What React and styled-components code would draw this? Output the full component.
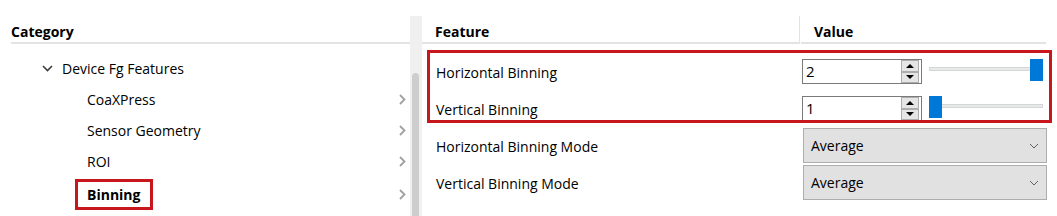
import React from 'react'
import styled, { createGlobalStyle } from 'styled-components';

const GlobalStyle = createGlobalStyle`
    html, body {
        margin: 0;
        padding: 0;
        background: #ffffff;
    }
    body {
        font-family: "Open Sans", "Noto Sans", sans-serif;
        font-size: 14px;
        color: #000000;
    }
`

const treeItems = [
    { label: 'CoaXPress' },
    { label: 'Sensor Geometry' },
    { label: 'ROI' },
    { label: 'Binning', selected: true },
];

const features = [
    { label: 'Horizontal Binning', kind: 'spin', value: 2, min: 1, max: 2 },
    { label: 'Vertical Binning', kind: 'spin', value: 1, min: 1, max: 2 },
    { label: 'Horizontal Binning Mode', kind: 'combo', value: 'Average' },
    { label: 'Vertical Binning Mode', kind: 'combo', value: 'Average' },
];

const ChevronDown = () => (
    <svg width="11" height="7" viewBox="0 0 11 7">
        <polyline points="1,1 5.5,5.5 10,1" fill="none" stroke="#3c3c3c" strokeWidth="1.6" />
    </svg>
)

const ChevronRight = () => (
    <svg width="7" height="11" viewBox="0 0 7 11">
        <polyline points="1,1 5.5,5.5 1,10" fill="none" stroke="#a0a0a0" strokeWidth="1.8" />
    </svg>
)

const ComboChevron = () => (
    <svg width="10" height="6" viewBox="0 0 10 6">
        <polyline points="1,1 5,5 9,1" fill="none" stroke="#606060" strokeWidth="1" />
    </svg>
)

const Slider = ({ value, min, max }) => {
    const pos = ((value - min) / (max - min)) * (114 - 13);
    return (
        <SliderBox>
            <Track />
            <Thumb style={{ left: pos }} />
        </SliderBox>
    )
}

const SpinEditor = ({ value, min, max }) => (
    <ValueCell>
        <SpinBox>
            <SpinText>{value}</SpinText>
            <SpinButtons>
                <SpinButton><Arrow $up /></SpinButton>
                <SpinButton><Arrow /></SpinButton>
            </SpinButtons>
        </SpinBox>
        <Slider value={value} min={min} max={max} />
    </ValueCell>
)

const FeatureRow = ({ item }) => (
    <Row>
        <Label>{item.label}</Label>
        {item.kind === 'spin' ? (
            <SpinEditor value={item.value} min={item.min} max={item.max} />
        ) : (
            <ValueCell>
                <Combo>
                    <span>{item.value}</span>
                    <ComboChevron />
                </Combo>
            </ValueCell>
        )}
    </Row>
)

const App = () => {
    return (
        <>
            <GlobalStyle />
            <Page>
                <LeftPanel>
                    <Tree>
                        <TreeHeader>Category</TreeHeader>
                        <TreeList>
                            <TreeRow $indent={31}>
                                <ChevronDown />
                                <ParentLabel>Device Fg Features</ParentLabel>
                            </TreeRow>
                            {treeItems.map((item) => (
                                <TreeRow key={item.label} $indent={item.selected ? 64 : 76} $last={item.selected}>
                                    {item.selected
                                        ? <SelectedLabel>{item.label}</SelectedLabel>
                                        : <span>{item.label}</span>}
                                    <Expander><ChevronRight /></Expander>
                                </TreeRow>
                            ))}
                        </TreeList>
                    </Tree>
                    <ScrollTrack>
                        <ScrollThumb />
                    </ScrollTrack>
                </LeftPanel>
                <RightPanel>
                    <GridHeader>
                        <FeatureHead>Feature</FeatureHead>
                        <ValueHead>Value</ValueHead>
                    </GridHeader>
                    <Rows>
                        <Highlight>
                            {features.slice(0, 2).map((f) => <FeatureRow key={f.label} item={f} />)}
                        </Highlight>
                        {features.slice(2).map((f) => <FeatureRow key={f.label} item={f} />)}
                    </Rows>
                </RightPanel>
            </Page>
        </>
    )
}

export default App;

const Page = styled.div`
    width: 1057px;
    height: 216px;
    display: flex;
    overflow: hidden;
    background: #ffffff;
`

const LeftPanel = styled.div`
    width: 422px;
    display: flex;
`

const Tree = styled.div`
    width: 399px;
    padding: 16px 0 0 11px;
`

const TreeHeader = styled.div`
    height: 26px;
    box-sizing: border-box;
    padding-top: 5px;
    line-height: 21px;
    font-weight: 700;
    border-bottom: 2px solid #e3e3e3;
    box-sizing: content-box;
    height: 21px;
`

const TreeList = styled.div`
    padding-top: 9px;
`

const TreeRow = styled.div`
    height: 31px;
    display: flex;
    align-items: center;
    gap: 9px;
    padding-left: ${(p) => p.$indent}px;
    margin-top: ${(p) => (p.$last ? '2px' : '0')};
`

const ParentLabel = styled.span`
    color: #000000;
`

const SelectedLabel = styled.span`
    height: 31px;
    box-sizing: border-box;
    display: flex;
    align-items: center;
    padding: 0 10px 0 9px;
    border: 3px solid #c8161d;
    font-weight: 700;
`

const Expander = styled.span`
    margin-left: auto;
    margin-right: 4px;
    display: flex;
`

const ScrollTrack = styled.div`
    width: 12px;
    margin-top: 16px;
    background: #f0f0f0;
`

const ScrollThumb = styled.div`
    width: 7px;
    height: 200px;
    margin: 57px 0 0 2px;
    border-radius: 4px;
    background: #cdcdcd;
`

const RightPanel = styled.div`
    width: 635px;
    padding-top: 16px;
`

const GridHeader = styled.div`
    display: flex;
    height: 28px;
    font-weight: 700;
`

const FeatureHead = styled.div`
    width: 364px;
    padding: 5px 0 0 13px;
    line-height: 21px;
    border-right: 1px solid #e3e3e3;
    border-bottom: 2px solid #e3e3e3;
`

const ValueHead = styled.div`
    width: 232px;
    margin-left: 1px;
    padding: 5px 0 0 13px;
    line-height: 21px;
    border-bottom: 2px solid #e3e3e3;
`

const Rows = styled.div`
    padding-top: 9px;
`

const Highlight = styled.div`
    position: relative;

    &::after {
        content: '';
        position: absolute;
        top: -3px;
        bottom: 4px;
        left: 5px;
        right: 5px;
        border: 3px solid #c8161d;
        pointer-events: none;
    }
`

const Row = styled.div`
    height: 37px;
    display: grid;
    grid-template-columns: 380px 245px;
    align-items: center;
`

const Label = styled.span`
    padding-left: 14px;
    padding-top: 1px;
`

const ValueCell = styled.div`
    display: flex;
    align-items: center;
    gap: 7px;
`

const SpinBox = styled.div`
    width: 120px;
    height: 25px;
    box-sizing: border-box;
    border: 1px solid #7a7a7a;
    display: flex;
    background: #ffffff;
`

const SpinText = styled.span`
    flex: 1;
    padding-left: 3px;
    font-size: 15px;
    line-height: 23px;
`

const SpinButtons = styled.div`
    width: 18px;
    margin-right: 2px;
    display: flex;
    flex-direction: column;
`

const SpinButton = styled.div`
    flex: 1;
    box-sizing: border-box;
    border: 1px solid #adadad;
    background: #e5e5e5;
    display: flex;
    align-items: center;
    justify-content: center;
`

const Arrow = styled.span`
    width: 0;
    height: 0;
    border-left: 4px solid transparent;
    border-right: 4px solid transparent;
    ${(p) => (p.$up ? 'border-bottom: 4px solid #000;' : 'border-top: 4px solid #000;')}
`

const SliderBox = styled.div`
    position: relative;
    width: 114px;
    height: 22px;
    margin-bottom: 3px;
`

const Track = styled.div`
    margin-top: 8px;
    height: 4px;
    box-sizing: border-box;
    border: 1px solid #d6d6d6;
    background: #e7eaea;
`

const Thumb = styled.div`
    position: absolute;
    top: 0;
    width: 13px;
    height: 22px;
    background: #0078d7;
`

const Combo = styled.div`
    width: 244px;
    height: 35px;
    margin-left: 1px;
    box-sizing: border-box;
    border: 1px solid #adadad;
    background: #e1e1e1;
    display: flex;
    align-items: center;
    justify-content: space-between;
    padding: 0 7px 0 7px;
`
